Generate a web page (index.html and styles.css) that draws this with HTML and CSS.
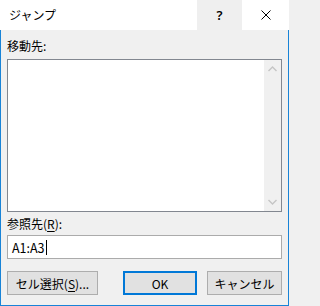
FILE: index.html
```html
<!DOCTYPE html>
<html lang="ja">
<head>
<meta charset="utf-8">
<link rel="stylesheet" href="styles.css">
</head>
<body>
<div class="window">
  <div class="titlebar">
    <div class="title">ジャンプ</div>
    <div class="tb-btn help">?</div>
    <div class="tb-btn close">
      <svg width="10" height="10" viewBox="0 0 10 10"><path d="M0.5 0.5 L9.5 9.5 M9.5 0.5 L0.5 9.5" stroke="#000" stroke-width="1" fill="none"/></svg>
    </div>
  </div>
  <div class="client">
    <div class="label first">移動先:</div>
    <div class="listbox">
      <div class="list-area"></div>
      <div class="scrollbar">
        <svg class="arrow" width="9" height="6" viewBox="0 0 9 6"><path d="M0.5 5 L4.5 1 L8.5 5" stroke="#c5c5c5" stroke-width="1.4" fill="none"/></svg>
        <svg class="arrow" width="9" height="6" viewBox="0 0 9 6"><path d="M0.5 1 L4.5 5 L8.5 1" stroke="#c5c5c5" stroke-width="1.4" fill="none"/></svg>
      </div>
    </div>
    <div class="label second">参照先(<u>R</u>):</div>
    <div class="textbox"><span class="val">A1:A3</span><span class="caret"></span></div>
    <div class="buttons">
      <div class="btn sel">セル選択(<u>S</u>)...</div>
      <div class="btn ok">OK</div>
      <div class="btn cancel">キャンセル</div>
    </div>
  </div>
</div>
</body>
</html>
```
FILE: styles.css
```css
html, body {
  margin: 0;
  padding: 0;
  background: #f0f0f0;
}
body {
  font-family: "Noto Sans CJK JP", "Noto Sans", sans-serif;
  font-size: 12px;
  color: #000;
}
.window {
  width: 289px;
  height: 306px;
  display: flex;
  flex-direction: column;
}
.titlebar {
  height: 30px;
  background: #fff;
  display: flex;
  align-items: stretch;
}
.title {
  flex: 1;
  padding-left: 9px;
  line-height: 30px;
  font-size: 12px;
}
.tb-btn {
  display: flex;
  align-items: center;
  justify-content: center;
}
.help {
  width: 45px;
  background: #efefef;
  font-family: "Noto Sans", sans-serif;
  font-weight: 600;
  font-size: 13px;
}
.close {
  width: 47px;
}
.client {
  flex: 1;
  border: 1px solid #1883d7;
  border-top: none;
  padding: 0 6px;
  display: flex;
  flex-direction: column;
}
.label {
  line-height: 16px;
  height: 16px;
}
.label.first {
  margin-top: 8px;
  margin-bottom: 5px;
}
.label.second {
  margin-top: 4px;
  margin-bottom: 3px;
}
.label u, .btn u {
  text-decoration: underline;
  text-underline-offset: 2px;
}
.listbox {
  height: 153px;
  box-sizing: border-box;
  border: 1px solid #828790;
  background: #fff;
  display: flex;
}
.list-area {
  flex: 1;
}
.scrollbar {
  width: 17px;
  background: #f0f0f0;
  display: flex;
  flex-direction: column;
  justify-content: space-between;
  align-items: center;
  padding: 6px 0 6px;
}
.arrow {
  display: block;
}
.textbox {
  height: 24px;
  box-sizing: border-box;
  border: 1px solid #ababab;
  background: #fff;
  display: flex;
  align-items: center;
  padding-left: 4px;
  font-size: 12.5px;
}
.caret {
  width: 1px;
  height: 15px;
  background: #000;
  margin-left: 1px;
}
.buttons {
  margin-top: 12px;
  display: flex;
  align-items: center;
}
.btn {
  height: 24px;
  box-sizing: border-box;
  border: 1px solid #adadad;
  background: #e1e1e1;
  display: flex;
  align-items: center;
  justify-content: center;
}
.btn.sel {
  width: 91px;
}
.btn.ok {
  width: 74px;
  margin-left: 25px;
  border: 2px solid #0078d7;
}
.btn.cancel {
  width: 75px;
  margin-left: 10px;
}
```
